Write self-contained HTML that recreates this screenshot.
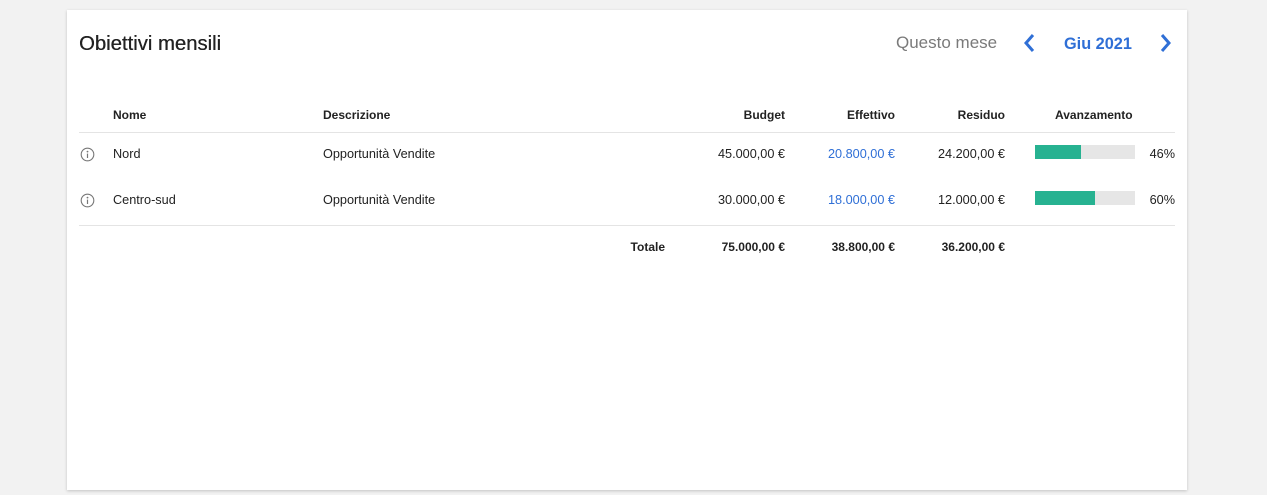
<!DOCTYPE html>
<html><head><meta charset="utf-8"><style>
body{margin:0;width:1267px;height:495px;background:#f2f2f2;font-family:"Liberation Sans",Arial,sans-serif;position:relative;overflow:hidden;color:#222}
.card{position:absolute;left:67px;top:10px;width:1120px;height:480px;background:#fff;box-shadow:0 1px 3px rgba(0,0,0,.2)}
.t{position:absolute;white-space:nowrap;font-size:12.7px;line-height:14px}
.r{text-align:right}
.b{font-weight:bold;font-size:12px}
.blue{color:#2f6fd6}
.line{position:absolute;left:12px;width:1096px;height:1px;background:#e4e4e4}
.bar{position:absolute;left:968px;width:100px;height:14px;background:#e6e6e6}
.bar div{height:100%;background:#27b291}
</style></head><body>
<div class="card">
<div class="t" style="left:12px;top:22px;font-size:20.3px;line-height:24px;color:#222;text-shadow:0.3px 0 0 #222">Obiettivi mensili</div>
<div class="t" style="left:829px;top:23px;font-size:17px;line-height:20px;color:#7a7a7a">Questo mese</div>
<svg style="position:absolute;left:955px;top:23px" width="14" height="20"><path d="M11 2 L4 10 L11 18" fill="none" stroke="#2f6fd6" stroke-width="3"/></svg>
<div class="t b blue" style="left:997px;top:24px;font-size:16.3px;line-height:20px">Giu 2021</div>
<svg style="position:absolute;left:1092px;top:23px" width="14" height="20"><path d="M3 2 L10 10 L3 18" fill="none" stroke="#2f6fd6" stroke-width="3"/></svg>

<div class="t b" style="left:46px;top:98px">Nome</div>
<div class="t b" style="left:256px;top:98px">Descrizione</div>
<div class="t b r" style="right:402px;top:98px">Budget</div>
<div class="t b r" style="right:292px;top:98px">Effettivo</div>
<div class="t b r" style="right:182px;top:98px">Residuo</div>
<div class="t b" style="left:988px;top:98px">Avanzamento</div>
<div class="line" style="top:122px"></div>

<svg style="position:absolute;left:13px;top:137px" width="15" height="15"><circle cx="7.5" cy="7.5" r="6.3" fill="none" stroke="#777" stroke-width="1.1"/><circle cx="7.5" cy="4.6" r=".9" fill="#777"/><path d="M7.5 6.6V11" stroke="#777" stroke-width="1.2"/></svg>
<div class="t" style="left:46px;top:137px">Nord</div>
<div class="t" style="left:256px;top:137px">Opportunità Vendite</div>
<div class="t r" style="right:402px;top:137px">45.000,00 €</div>
<div class="t r blue" style="right:292px;top:137px">20.800,00 €</div>
<div class="t r" style="right:182px;top:137px">24.200,00 €</div>
<div class="bar" style="top:135px"><div style="width:46px"></div></div>
<div class="t r" style="right:12px;top:137px">46%</div>

<svg style="position:absolute;left:13px;top:183px" width="15" height="15"><circle cx="7.5" cy="7.5" r="6.3" fill="none" stroke="#777" stroke-width="1.1"/><circle cx="7.5" cy="4.6" r=".9" fill="#777"/><path d="M7.5 6.6V11" stroke="#777" stroke-width="1.2"/></svg>
<div class="t" style="left:46px;top:183px">Centro-sud</div>
<div class="t" style="left:256px;top:183px">Opportunità Vendite</div>
<div class="t r" style="right:402px;top:183px">30.000,00 €</div>
<div class="t r blue" style="right:292px;top:183px">18.000,00 €</div>
<div class="t r" style="right:182px;top:183px">12.000,00 €</div>
<div class="bar" style="top:181px"><div style="width:60px"></div></div>
<div class="t r" style="right:12px;top:183px">60%</div>

<div class="line" style="top:215px"></div>
<div class="t b r" style="right:522px;top:230px">Totale</div>
<div class="t b r" style="right:402px;top:230px">75.000,00 €</div>
<div class="t b r" style="right:292px;top:230px">38.800,00 €</div>
<div class="t b r" style="right:182px;top:230px">36.200,00 €</div>
</div>
</body></html>
